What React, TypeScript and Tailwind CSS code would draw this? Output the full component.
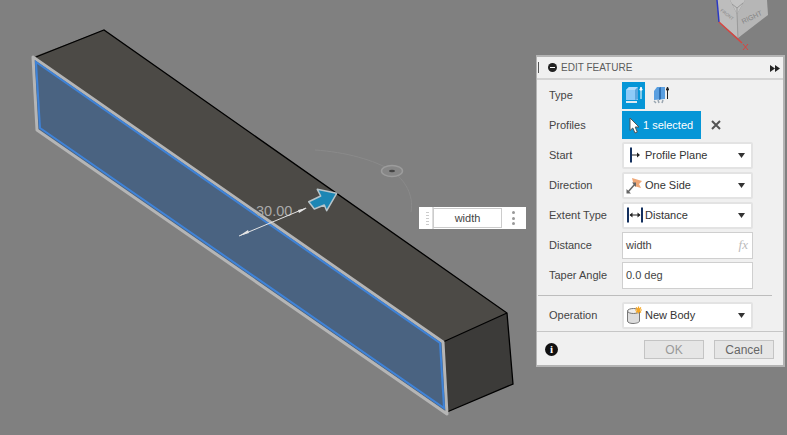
import React from 'react';

const font = { fontFamily: '"Liberation Sans", Arial, sans-serif' };

function Scene() {
  return (
    <svg className="absolute inset-0" width="787" height="435" viewBox="0 0 787 435">
      {/* top face */}
      <polygon points="33,57 104,30 507,313 443,342" fill="#4c4a46" />
      {/* end face */}
      <polygon points="443,342 507,313 513,384 447,412" fill="#3c3b39" />
      {/* selected profile */}
      <polygon points="33,57 443,342 447,412 37,130" fill="#4a6381" />
      {/* black edges */}
      <path d="M36,57 L104,30 L507,313 L513,384 L447,412 M443,342 L507,313" fill="none" stroke="#000" strokeWidth="1.3" />
      {/* grey outline of selection */}
      <path d="M33,57 L443,342 L447,414 L37,130 Z" fill="none" stroke="#b5b5b5" strokeWidth="3" strokeLinejoin="round" />
      <path d="M36,62 L440,343 L444,408 L40,128 Z" fill="none" stroke="#3f83d8" strokeWidth="2" />
      {/* arc and handle */}
      <path d="M315,150 C345,152 375,160 392,171 C405,180 414,195 411,212" fill="none" stroke="#8a8a8a" strokeWidth="1" />
      <ellipse cx="392" cy="171" rx="10.5" ry="5.5" fill="#868686" stroke="#9c9c9c" strokeWidth="1.5" />
      <ellipse cx="392" cy="171" rx="3" ry="1.3" fill="#444" />
      {/* dimension */}
      <text x="256" y="216" fontSize="14.5" fill="#a9a9a9" style={font}>30.00</text>
      <path d="M239,236 L306,208" stroke="#e4e4e4" strokeWidth="1" />
      <path d="M239,236 L248,230 L249,233 Z M307,208 L298,210 L299,213 Z" fill="#e4e4e4" />
      {/* extrude arrow */}
      <polygon points="336.7,193.3 317.3,189.3 320.7,196 308.7,201.7 314.3,209 324.3,205 326.7,210.7" fill="#1c86b4" stroke="#b9c5ca" strokeWidth="1.5" strokeLinejoin="round" />
      {/* view cube */}
      <polygon points="717,0 719,22 738,38 737,14 730,0" fill="#bdbdbd" />
      <polygon points="737,14 738,38 768,15 767,0 745,0" fill="#b6b6b6" />
      <polygon points="730,0 737,14 745,0" fill="#c4c4c4" />
      <path d="M737,14 L738,38" stroke="#9b9b9b" strokeWidth="1" />
      <path d="M732,4 L737,8 L743,3 M737,8 V14" stroke="#999" strokeWidth="1" fill="none" />
      <path d="M717,0 L719,22" stroke="#2b39c4" strokeWidth="1.5" />
      <path d="M719,22 L742,43" stroke="#d9443f" strokeWidth="1.5" />
      <path d="M743,44 L748,50 M748,44 L743,50" stroke="#d9443f" strokeWidth="1" />
      <text x="0" y="0" fontSize="7" fill="#858585" transform="translate(743,24) rotate(-25)" style={font}>RIGHT</text>
      <text x="0" y="0" fontSize="4.5" fill="#858585" transform="translate(720,11) rotate(38)" style={font}>FRONT</text>
    </svg>
  );
}

function Row({ label, children }: { label: string; children: React.ReactNode }) {
  return (
    <div className="flex items-center h-[30px]">
      <div className="w-[85px] pl-[12px] text-[11px] text-[#444]">{label}</div>
      {children}
    </div>
  );
}

function Select({ icon, text }: { icon: React.ReactNode; text: string }) {
  return (
    <div className="flex items-center w-[131px] h-[27px] bg-white border-2 border-[#e3e3e3] rounded-[2px] relative">
      <div className="w-[21px] h-[23px] flex items-center justify-center shrink-0">{icon}</div>
      <span className="text-[11px] text-[#333]">{text}</span>
      <svg className="absolute right-[6px] top-[9px]" width="7" height="5" viewBox="0 0 7 5">
        <path d="M0 0H7L3.5 5Z" fill="#333" />
      </svg>
    </div>
  );
}

function TextInput({ value, fx }: { value: string; fx?: boolean }) {
  return (
    <div className="flex items-center justify-between w-[131px] h-[27px] bg-white border border-[#cfcfcf] px-[3px] text-[11px] text-[#444]">
      <span>{value}</span>
      {fx && <span className="italic text-[#bbb] text-[13px] pr-[1px]" style={{ fontFamily: '"Liberation Serif", serif' }}>fx</span>}
    </div>
  );
}

export default function App() {
  return (
    <div className="relative w-[787px] h-[435px] overflow-hidden bg-[#808080]" style={font}>
      <Scene />

      {/* width input on the canvas */}
      <div className="absolute left-[419px] top-[207px] w-[107px] h-[22px] bg-white flex items-center">
        <div className="w-[12px] h-full ml-[3px] border-r-2 border-[#ddd] flex flex-col justify-center items-center gap-[2px]">
          {[0, 1, 2, 3, 4].map((i) => (
            <span key={i} className="w-[3px] h-[1px] bg-[#ccc]" />
          ))}
        </div>
        <div className="ml-[-1px] w-[69px] h-[20px] border border-[#ccc] flex items-center justify-center text-[11px] text-[#444]">width</div>
        <div className="ml-[10px] flex flex-col gap-[2.5px]">
          <span className="w-[3px] h-[3px] rounded-full bg-[#999]" />
          <span className="w-[3px] h-[3px] rounded-full bg-[#999]" />
          <span className="w-[3px] h-[3px] rounded-full bg-[#999]" />
        </div>
      </div>

      {/* edit feature panel */}
      <div className="absolute left-[536px] top-[55px] w-[249px] h-[312px] bg-[#f0f0f0] border-2 border-[#b4b4b4] border-l-[1px]">
        <div className="flex items-center h-[23px] border-b-2 border-[#d4d4d4] relative">
          <span className="ml-[1px] w-[1px] h-[11px] bg-[#555]" />
          <span className="ml-[9px] w-[9px] h-[9px] rounded-full bg-[#222] flex items-center justify-center">
            <span className="w-[5px] h-[1px] bg-white" />
          </span>
          <span className="ml-[4px] text-[10px] text-[#5b5b5b]">EDIT FEATURE</span>
          <svg className="absolute right-[3px] top-[8px]" width="10" height="7" viewBox="0 0 10 7">
            <path d="M0 0L5 3.5L0 7ZM5 0L10 3.5L5 7Z" fill="#222" />
          </svg>
        </div>

        <div>
          <Row label="Type">
            <div className="flex items-center">
              <div className="w-[23px] h-[27px] bg-[#0696d7] flex items-center justify-center">
                <svg width="18" height="20" viewBox="0 0 18 20">
                  <polygon points="1,5 4,2 13,2 13,15 1,15" fill="#8ecbf8" />
                  <polygon points="1,5 4,2 13,2 10,5" fill="#b4dcfa" />
                  <polygon points="10,5 13,2 13,14 10,15" fill="#5ba6dd" />
                  <rect x="1" y="16" width="11" height="2" fill="#dfeaf2" />
                  <path d="M16 14V3M14.8 5L16 2L17.2 5Z" stroke="#fff" strokeWidth="1" fill="#fff" />
                </svg>
              </div>
              <div className="ml-[5px] w-[22px] h-[27px] flex items-center justify-center">
                <svg width="18" height="20" viewBox="0 0 18 20">
                  <polygon points="2,6 5,2 13,2 13,14 2,15" fill="#5a9fe0" />
                  <polygon points="7,3 9,2 9,14 7,15" fill="#2f6fb0" />
                  <path d="M2 16L4 18M6 15L7 18M11 15L10 18" stroke="#9aa6b0" strokeWidth="1.5" />
                  <path d="M15.5 14V3M14.3 5L15.5 2L16.7 5Z" stroke="#222" strokeWidth="1" fill="#222" />
                </svg>
              </div>
            </div>
          </Row>
          <Row label="Profiles">
            <div className="w-[79px] h-[28px] bg-[#0696d7] flex items-center">
              <svg className="ml-[7px]" width="11" height="17" viewBox="0 0 11 17">
                <path d="M1 1V13.5L3.8 11L6 16L8.3 15L6.2 10L10 10Z" fill="#fff" stroke="#555" strokeWidth="1" />
              </svg>
              <span className="ml-[3px] text-[11px] text-white whitespace-nowrap">1 selected</span>
            </div>
            <svg className="ml-[10px]" width="10" height="10" viewBox="0 0 10 10">
              <path d="M1 1L9 9M9 1L1 9" stroke="#555" strokeWidth="2" />
            </svg>
          </Row>
          <Row label="Start">
            <Select
              text="Profile Plane"
              icon={
                <svg width="14" height="16" viewBox="0 0 14 16">
                  <path d="M3 0.5V15.5" stroke="#14305e" strokeWidth="2" />
                  <path d="M4 8H11" stroke="#222" strokeWidth="1" />
                  <path d="M9 5.5L12 8L9 10.5Z" fill="#222" />
                </svg>
              }
            />
          </Row>
          <Row label="Direction">
            <Select
              text="One Side"
              icon={
                <svg width="17" height="17" viewBox="0 0 17 17">
                  <polygon points="6,1 16,4 13,7 15,11 8,9" fill="#eea777" />
                  <path d="M2 15L9 7" stroke="#666" strokeWidth="1.5" />
                  <path d="M0.5 16.5V12L5 16.5Z M10 5.5V10L6 5.5Z" fill="#666" />
                </svg>
              }
            />
          </Row>
          <Row label="Extent Type">
            <Select
              text="Distance"
              icon={
                <svg width="18" height="16" viewBox="0 0 18 16">
                  <path d="M2 0.5V15.5M16 0.5V15.5" stroke="#14305e" strokeWidth="2" />
                  <path d="M4 8H14" stroke="#222" strokeWidth="1" />
                  <path d="M6.5 5.5L3.5 8L6.5 10.5ZM11.5 5.5L14.5 8L11.5 10.5Z" fill="#222" />
                </svg>
              }
            />
          </Row>
          <Row label="Distance">
            <TextInput value="width" fx />
          </Row>
          <Row label="Taper Angle">
            <TextInput value="0.0 deg" />
          </Row>
        </div>

        <div className="mt-[5px] ml-[1px] w-[234px] h-[1px] bg-[#bdbdbd]" />

        <div className="mt-[4px]">
          <Row label="Operation">
            <Select
              text="New Body"
              icon={
                <svg width="17" height="18" viewBox="0 0 17 18">
                  <path d="M1.5 5V15C1.5 16.5 4 17.5 7 17.5C10 17.5 13.5 16.5 13.5 15V5Z" fill="#ddd" stroke="#777" strokeWidth="1" />
                  <ellipse cx="7.5" cy="5" rx="6" ry="2.5" fill="#eee" stroke="#777" strokeWidth="1" />
                  <path d="M12.5 0.5V7.5M9 4H16M10 1.5L15 6.5M15 1.5L10 6.5" stroke="#f5a623" strokeWidth="1.2" />
                </svg>
              }
            />
          </Row>
        </div>

        <div className="h-[36px] mt-[1px] border-t border-[#c6c6c6] flex items-center relative">
          <span className="ml-[8px] w-[13px] h-[13px] rounded-full bg-[#111] flex items-center justify-center text-white text-[11px] font-bold" style={{ fontFamily: '"Liberation Serif", serif' }}>i</span>
          <div className="absolute left-[107px] top-[8px] w-[60px] h-[19px] bg-[#e6e6e6] border border-[#c4c4c4] flex items-center justify-center text-[12px] text-[#999]">OK</div>
          <div className="absolute left-[177px] top-[8px] w-[60px] h-[19px] bg-[#e6e6e6] border border-[#c4c4c4] flex items-center justify-center text-[12px] text-[#666]">Cancel</div>
        </div>
      </div>
    </div>
  );
}
